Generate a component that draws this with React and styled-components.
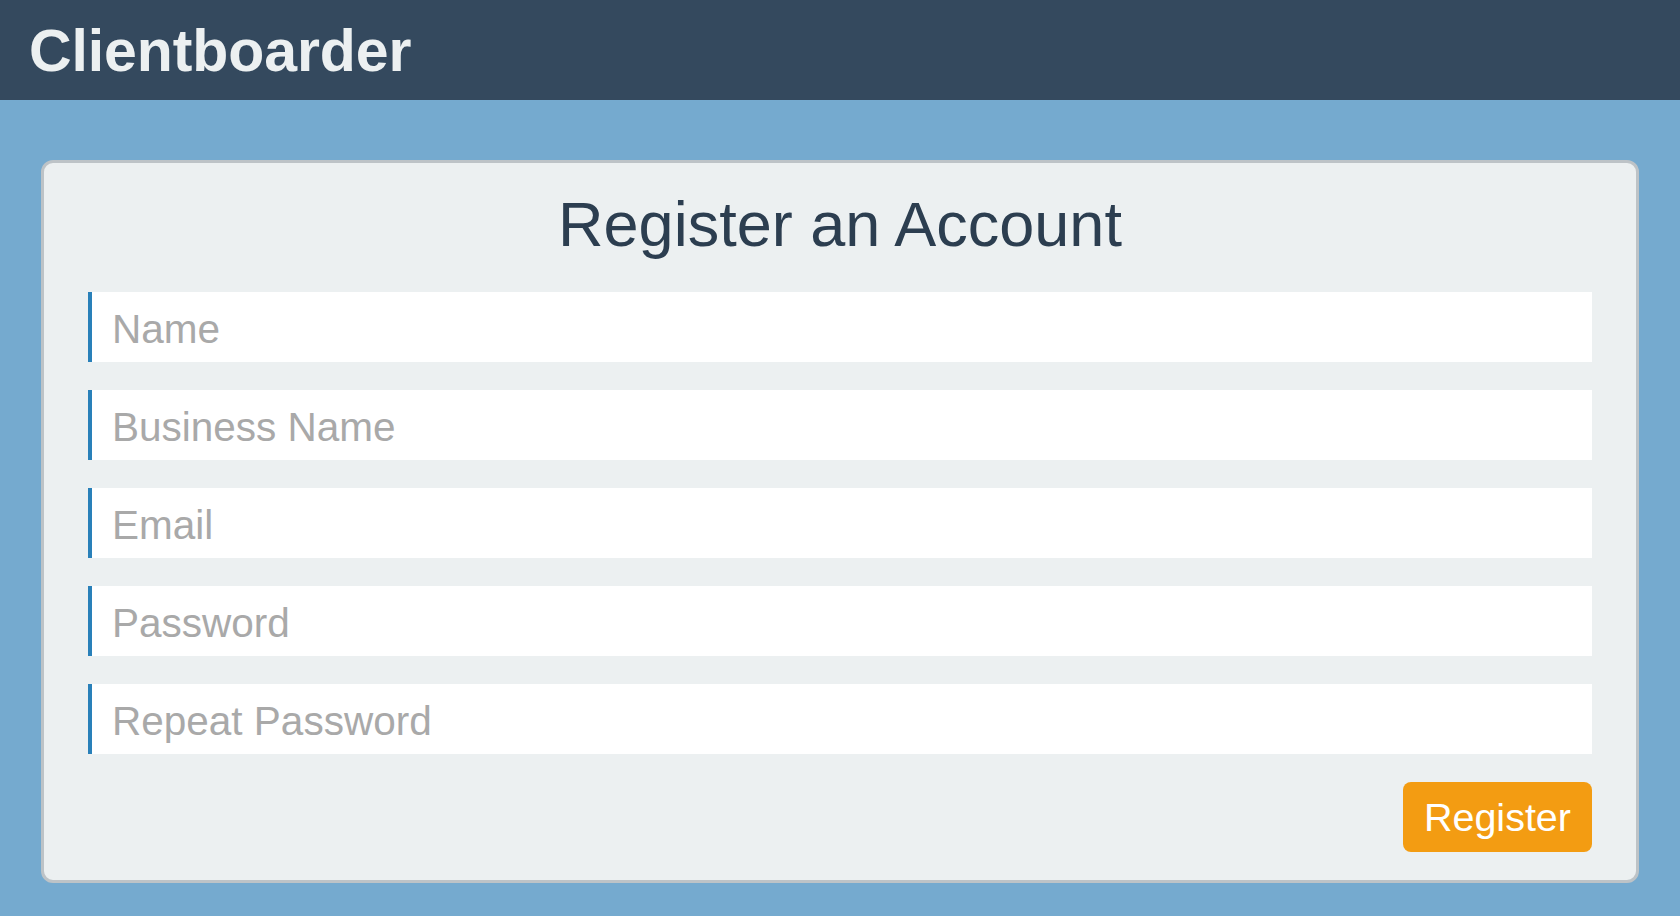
import styled, { createGlobalStyle } from "styled-components";

const GlobalStyle = createGlobalStyle`
  html, body {
    margin: 0;
    padding: 0;
    background: #75aacf;
    font-family: "Liberation Sans", Arial, sans-serif;
  }
  * {
    box-sizing: border-box;
  }
`;

const fields = ["Name", "Business Name", "Email", "Password", "Repeat Password"];

export default function App() {
  return (
    <>
      <GlobalStyle />
      <Page>
        <Header>
          <Brand>Clientboarder</Brand>
        </Header>
        <Main>
          <Card>
            <Title>Register an Account</Title>
            <Form onSubmit={(e) => e.preventDefault()}>
              {fields.map((label) => (
                <Field
                  key={label}
                  type={label.includes("Password") ? "password" : "text"}
                  placeholder={label}
                />
              ))}
              <Actions>
                <Button type="submit">Register</Button>
              </Actions>
            </Form>
          </Card>
        </Main>
      </Page>
    </>
  );
}

const Page = styled.div`
  min-height: 100vh;
  background: #75aacf;
`;

const Header = styled.header`
  height: 100px;
  background: #34495e;
  display: flex;
  align-items: center;
  padding: 2px 29px 0;
`;

const Brand = styled.h1`
  margin: 0;
  color: #ecf0f1;
  font-size: 59px;
  font-weight: bold;
  line-height: 1;
  letter-spacing: -0.1px;
`;

const Main = styled.main`
  padding: 60px 41px 33px;
`;

const Card = styled.section`
  background: #ecf0f1;
  border: 3px solid #bdc3c7;
  border-radius: 12px;
  padding: 25px 44px 28px;
`;

const Title = styled.h2`
  margin: 0 0 32px;
  text-align: center;
  color: #2c3e50;
  font-size: 63px;
  font-weight: normal;
  line-height: 72px;
`;

const Form = styled.form`
  display: flex;
  flex-direction: column;
  gap: 28px;
`;

const Field = styled.input`
  height: 70px;
  width: 100%;
  border: none;
  border-left: 4px solid #2980b9;
  background: #fff;
  padding: 4px 18px 0 20px;
  font-family: "Liberation Sans", Arial, sans-serif;
  font-size: 40.5px;
  color: #333;
  outline: none;

  &::placeholder {
    color: #a9a9a9;
  }
`;

const Actions = styled.div`
  display: flex;
  justify-content: flex-end;
`;

const Button = styled.button`
  height: 70px;
  padding: 0 21px;
  border: none;
  border-radius: 8px;
  background: #f39c12;
  color: #fff;
  font-family: "Liberation Sans", Arial, sans-serif;
  font-size: 39.5px;
  cursor: pointer;
`;
